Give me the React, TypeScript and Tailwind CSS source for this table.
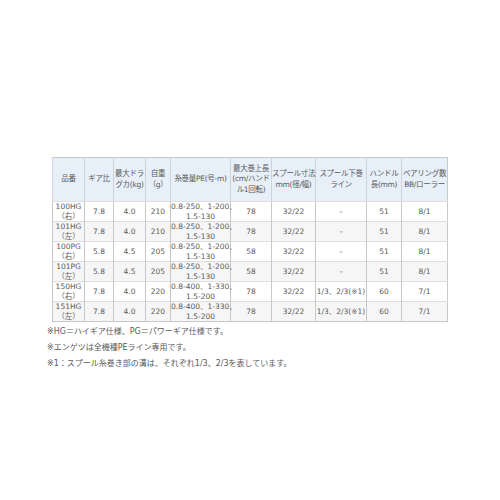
import React from "react";

const widths = [32, 29, 32, 25, 60, 41, 44, 51, 35, 46];

const headers: React.ReactNode[] = [
  "品番",
  "ギア比",
  <>最大ドラ<br />グカ(kg)</>,
  <>自重<br />（g）</>,
  "糸巻量PE(号-m)",
  <>最大巻上長<br />(cm/ハンド<br />ル1回転)</>,
  <>スプール寸法<br />mm(径/幅)</>,
  <>スプール下巻<br />ライン</>,
  <>ハンドル<br />長(mm)</>,
  <>ベアリング数<br />BB/ローラー</>,
];

const a = <>0.8-250、1-200、<br />1.5-130</>;
const b = <>0.8-400、1-330、<br />1.5-200</>;

const rows: React.ReactNode[][] = [
  [<>100HG<br />（右）</>, "7.8", "4.0", "210", a, "78", "32/22", "–", "51", "8/1"],
  [<>101HG<br />（左）</>, "7.8", "4.0", "210", a, "78", "32/22", "–", "51", "8/1"],
  [<>100PG<br />（右）</>, "5.8", "4.5", "205", a, "58", "32/22", "–", "51", "8/1"],
  [<>101PG<br />（左）</>, "5.8", "4.5", "205", a, "58", "32/22", "–", "51", "8/1"],
  [<>150HG<br />（右）</>, "7.8", "4.0", "220", b, "78", "32/22", "1/3、2/3(※1)", "60", "7/1"],
  [<>151HG<br />（左）</>, "7.8", "4.0", "220", b, "78", "32/22", "1/3、2/3(※1)", "60", "7/1"],
];

export default function App() {
  return (
    <div
      className="w-[500px] h-[500px] bg-white text-[#5a5a5a]"
      style={{ fontFamily: '"DejaVu Sans", "Noto Sans CJK JP", sans-serif' }}
    >
      <div className="pt-[157px] pl-[52px]">
        <table className="table-fixed border-collapse border border-[#c8c8c8] w-[396px] text-[7.5px] leading-[9.5px] text-center">
          <colgroup>
            {widths.map((w, i) => (
              <col key={i} style={{ width: w }} />
            ))}
          </colgroup>
          <thead>
            <tr className="h-[44px] bg-[#e7eff8]">
              {headers.map((h, i) => (
                <th
                  key={i}
                  className="font-normal border-l border-[#cdd3da] px-0 align-middle whitespace-nowrap tracking-[-0.3px] leading-[10.5px]"
                >
                  {h}
                </th>
              ))}
            </tr>
          </thead>
          <tbody>
            {rows.map((r, ri) => (
              <tr
                key={ri}
                className={`h-[19px] border-t border-[#dedede] ${ri % 2 === 1 ? "bg-[#f6f6f6]" : "bg-white"}`}
              >
                {r.map((c, ci) => (
                  <td
                    key={ci}
                    className="border-l border-[#c8c8c8] p-0 align-middle whitespace-nowrap"
                  >
                    {c}
                  </td>
                ))}
              </tr>
            ))}
          </tbody>
        </table>
      </div>
      <div className="pl-[47px] pt-[2px] flex flex-col text-[8px] leading-[16px] text-[#5a5a5a]">
        <div>※HG＝ハイギア仕様、PG＝パワーギア仕様です。</div>
        <div>※エンゲツは全機種PEライン専用です。</div>
        <div>※1：スプール糸巻き部の溝は、それぞれ1/3、2/3を表しています。</div>
      </div>
    </div>
  );
}
